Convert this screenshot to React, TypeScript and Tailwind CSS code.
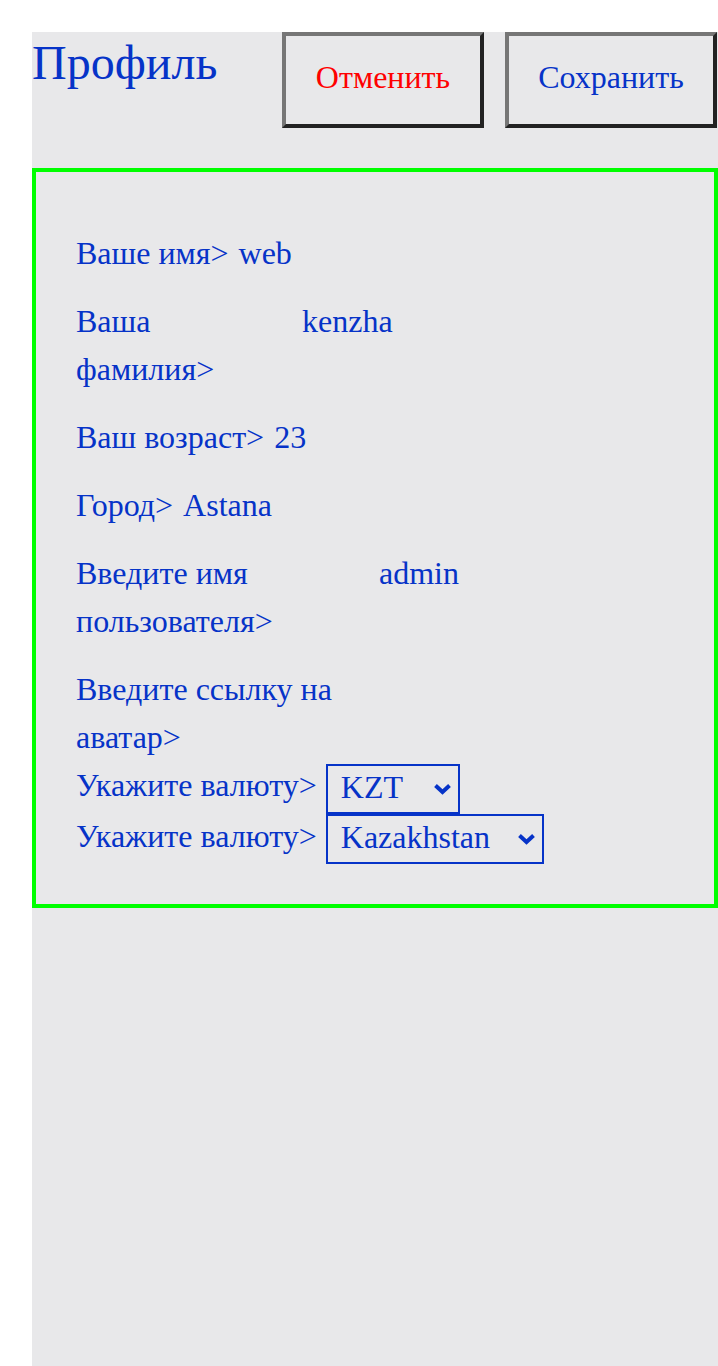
const BLUE = "text-[#0633c8]";

type Row = { label: string; value?: string; labelWidth?: string };

const rows: Row[] = [
  { label: "Ваше имя>", value: "web" },
  { label: "Ваша фамилия>", value: "kenzha", labelWidth: "w-[216px]" },
  { label: "Ваш возраст>", value: "23" },
  { label: "Город>", value: "Astana" },
  { label: "Введите имя пользователя>", value: "admin", labelWidth: "w-[293px]" },
  { label: "Введите ссылку на аватар>", labelWidth: "w-[293px]" },
];

function ProfileRow({ label, value, labelWidth }: Row) {
  return (
    <div className="flex items-start gap-[10px]">
      <span className={`shrink-0 ${labelWidth ?? ""}`}>{label}</span>
      {value && <span>{value}</span>}
    </div>
  );
}

function Chevron() {
  return (
    <svg
      className="pointer-events-none absolute right-[8px] top-1/2 -translate-y-1/2"
      width="19"
      height="12"
      viewBox="0 0 19 12"
      fill="none"
    >
      <path d="M2.5 2.5 L9.5 9 L16.5 2.5" stroke="#0633c8" strokeWidth="4" strokeLinejoin="miter" />
    </svg>
  );
}

function Picker({ options, width, className }: { options: string[]; width: string; className?: string }) {
  return (
    <div className={`relative ${className ?? ""}`}>
      <select
        className={`block ${width} appearance-none border-2 border-[#0633c8] pt-[3px] pb-[6px] pl-[13px] text-[32px] leading-[37px] outline-none`}
      >
        {options.map((o) => (
          <option key={o}>{o}</option>
        ))}
      </select>
      <Chevron />
    </div>
  );
}

export default function App() {
  return (
    <div
      className="min-h-screen bg-white pl-8 pt-8"
      style={{ fontFamily: '"Liberation Serif", "Times New Roman", serif' }}
    >
      <div className={`min-h-[1334px] bg-[#e8e8ea] ${BLUE}`}>
        <header className="flex items-start">
          <h1 className="mt-[3px] text-[48px] leading-[1.15]">Профиль</h1>
          <div className="ml-auto mr-px flex gap-[21px]">
            <button className="flex h-[96px] w-[202px] items-center justify-center border-4 border-t-[#767676] border-l-[#767676] border-b-[#222] border-r-[#222] pb-[6px] text-[32px] text-[#ff0000]">
              Отменить
            </button>
            <button className="flex h-[96px] w-[212px] items-center justify-center border-4 border-t-[#767676] border-l-[#767676] border-b-[#222] border-r-[#222] pb-[6px] text-[32px]">
              Сохранить
            </button>
          </div>
        </header>

        <section className="mt-10 border-4 border-[#00ff00] px-10 pb-10 pt-[57px] text-[32px] leading-[48px]">
          <div className="flex flex-col gap-[20px]">
            {rows.map((r) => (
              <ProfileRow key={r.label} {...r} />
            ))}
          </div>
          <div className="flex items-start gap-[9px]">
            <span>Укажите валюту&gt;</span>
            <Picker options={["KZT", "USD", "RUB"]} width="w-[134px]" className="mt-[3px]" />
          </div>
          <div className="flex items-start gap-[9px]">
            <span className="-mt-[2px]">Укажите валюту&gt;</span>
            <Picker options={["Kazakhstan", "Russia"]} width="w-[218px]" />
          </div>
        </section>
      </div>
    </div>
  );
}
